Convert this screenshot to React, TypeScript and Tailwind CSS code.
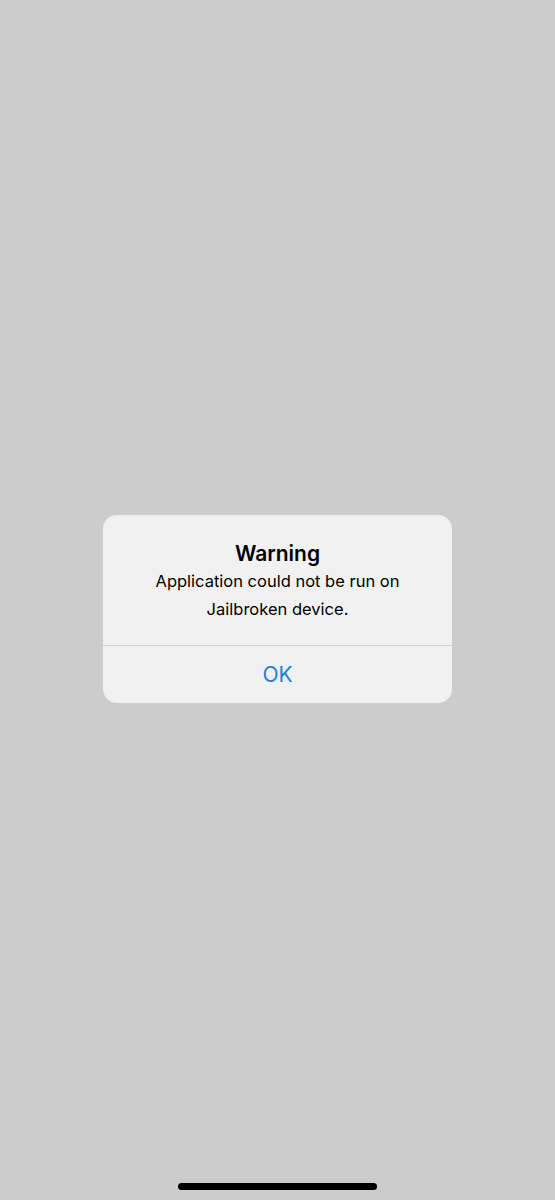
import React from 'react';

export default function App() {
    return (
        <div className="w-[555px] h-[1200px] bg-[#cccccc] flex flex-col items-center font-['Inter',_'Liberation_Sans',_sans-serif]">
            <div className="mt-[515px] w-[349px] rounded-[14px] bg-[#f2f1f2] overflow-hidden">
                <div className="pt-[26px] pb-[22px] px-4 text-center text-black">
                    <div className="text-[21px] leading-[26px] font-semibold">Warning</div>
                    <div className="text-[16.5px] leading-[28px]">
                        Application could not be run on
                        <br />
                        Jailbroken device.
                    </div>
                </div>
                <div className="h-px bg-[#cfcdd0]"></div>
                <button type="button" className="w-full h-[57px] flex items-center justify-center text-[21px] text-[#1a7ee8]">
                    OK
                </button>
            </div>
            <div className="mt-auto mb-[10px] w-[199px] h-[7px] rounded-full bg-black"></div>
        </div>
    );
}
